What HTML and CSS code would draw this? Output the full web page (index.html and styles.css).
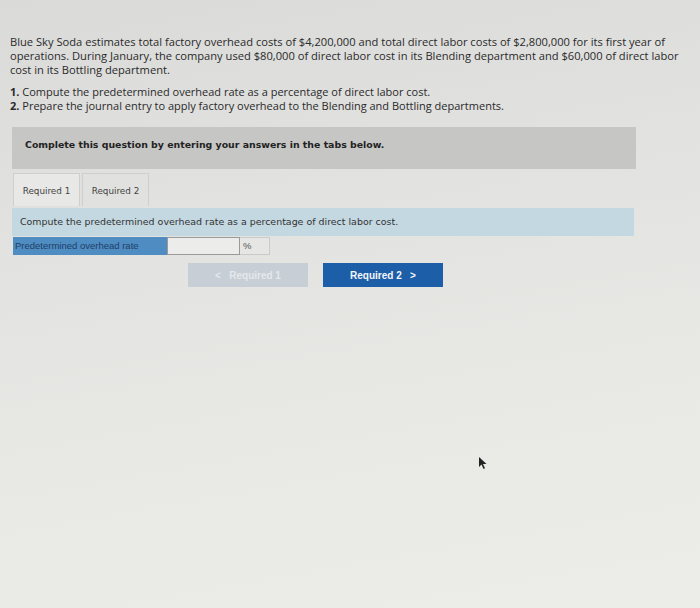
FILE: index.html
```html
<!DOCTYPE html>
<html lang="en">
<head>
    <meta charset="UTF-8">
    <title>Blue Sky Soda</title>
    <link rel="stylesheet" href="styles.css">
</head>
<body>
    <div class="page">
        <p class="intro">Blue Sky Soda estimates total factory overhead costs of $4,200,000 and total direct labor costs of $2,800,000 for its first year of operations. During January, the company used $80,000 of direct labor cost in its Blending department and $60,000 of direct labor cost in its Bottling department.</p>

        <ol class="tasks">
            <li><b>1.</b> Compute the predetermined overhead rate as a percentage of direct labor cost.</li>
            <li><b>2.</b> Prepare the journal entry to apply factory overhead to the Blending and Bottling departments.</li>
        </ol>

        <div class="notice">Complete this question by entering your answers in the tabs below.</div>

        <div class="tabs">
            <div class="tab active">Required 1</div>
            <div class="tab">Required 2</div>
        </div>

        <div class="instruction">Compute the predetermined overhead rate as a percentage of direct labor cost.</div>

        <div class="answer-row">
            <div class="answer-label">Predetermined overhead rate</div>
            <div class="answer-input"></div>
            <div class="answer-unit">%</div>
        </div>

        <div class="nav">
            <button class="nav-btn prev" disabled>&lt;&nbsp;&nbsp; Required 1</button>
            <button class="nav-btn next">Required 2 &nbsp;&nbsp;&gt;</button>
        </div>

        <svg class="cursor" width="10" height="14" viewBox="0 0 10 14">
            <path d="M1 1 L1 11 L3.5 8.5 L5.5 13 L7 12.3 L5 8 L8.5 8 Z" fill="#222"/>
        </svg>
    </div>
</body>
</html>
```

FILE: styles.css
```css
body {
    margin: 0;
    width: 700px;
    height: 608px;
    overflow: hidden;
    background: linear-gradient(170deg, #dadad9 0%, #e2e2e0 35%, #e9e9e6 70%, #ecece9 100%);
    color: #2a2a2a;
}

.page {
    position: relative;
    height: 100%;
    padding: 35px 10px 0 10px;
    box-sizing: border-box;
}

.intro {
    font-family: 'Open Sans', sans-serif;
    font-size: 11.15px;
    line-height: 14px;
    margin: 0 0 8px 0;
    width: 680px;
}

.tasks {
    list-style: none;
    font-family: 'Open Sans', sans-serif;
    font-size: 11px;
    line-height: 14px;
    margin: 0 0 14px 0;
    padding: 0;
}

.tasks b {
    font-weight: 700;
}

.notice {
    margin-left: 2px;
    width: 624px;
    height: 42px;
    box-sizing: border-box;
    padding: 12px 0 0 13px;
    background: #c6c6c5;
    font-family: 'DejaVu Sans', Verdana, sans-serif;
    font-weight: bold;
    font-size: 9.4px;
    color: #222;
}

.tabs {
    display: flex;
    gap: 2px;
    margin: 4px 0 0 3px;
}

.tab {
    width: 67px;
    height: 33px;
    box-sizing: border-box;
    border: 1px solid #cfcfcd;
    border-bottom: none;
    background: #e1e1df;
    font-family: 'DejaVu Sans', Verdana, sans-serif;
    font-size: 8.8px;
    color: #444;
    padding-top: 12px;
    text-align: center;
}

.tab.active {
    background: #e8e8e6;
}

.instruction {
    margin: 2px 0 0 2px;
    width: 622px;
    height: 28px;
    box-sizing: border-box;
    padding: 8px 0 0 8px;
    background: #c4d8e2;
    font-family: 'DejaVu Sans', Verdana, sans-serif;
    font-size: 9.45px;
    color: #333;
}

.answer-row {
    display: flex;
    margin: 1px 0 0 3px;
    height: 18px;
}

.answer-label {
    width: 154px;
    background: #4f8cc2;
    color: #1e3f66;
    font-family: 'Liberation Sans', Arial, sans-serif;
    font-size: 9.5px;
    line-height: 17px;
    padding-left: 2px;
    box-sizing: border-box;
}

.answer-input {
    width: 73px;
    background: #ececea;
    border: 1px solid #9a9a98;
    box-sizing: border-box;
}

.answer-unit {
    width: 30px;
    background: #e6e6e4;
    border: 1px solid #cacac8;
    border-left: none;
    box-sizing: border-box;
    font-family: 'Liberation Sans', Arial, sans-serif;
    font-size: 9.5px;
    line-height: 16px;
    padding-left: 3px;
    color: #555;
}

.nav {
    display: flex;
    gap: 15px;
    margin: 8px 0 0 178px;
}

.nav-btn {
    width: 120px;
    height: 24px;
    border: none;
    font-family: 'Liberation Sans', Arial, sans-serif;
    font-weight: bold;
    font-size: 10px;
    padding: 0;
}

.nav-btn.prev {
    background: #c7ced6;
    color: #e4e8ec;
}

.nav-btn.next {
    background: #1d5ea8;
    color: #f4f6fa;
}

.cursor {
    position: absolute;
    left: 478px;
    top: 456px;
}
```
